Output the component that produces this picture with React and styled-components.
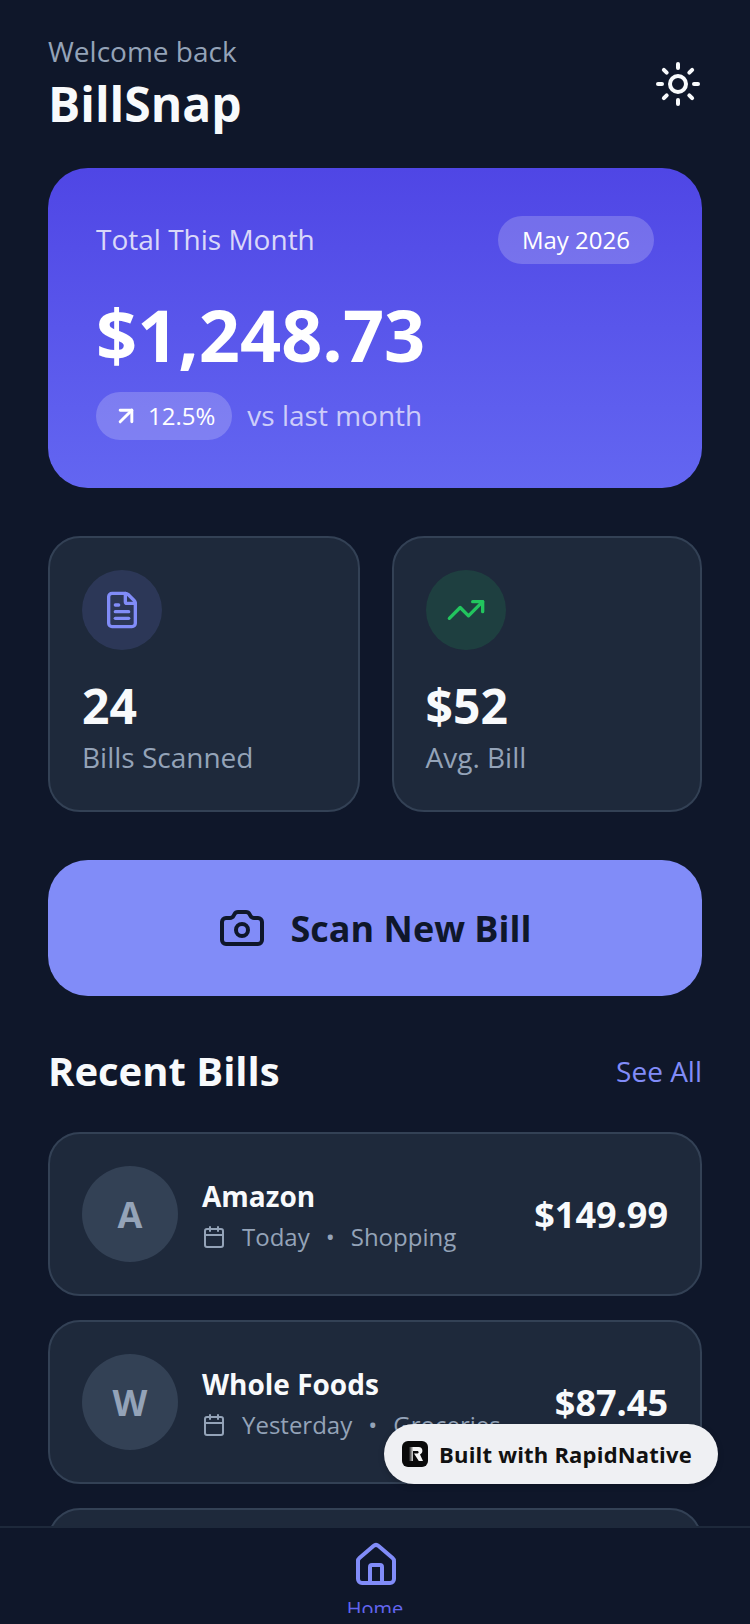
import React from "react";
import styled, { createGlobalStyle } from "styled-components";
import { Sun, FileText, TrendingUp, Camera, Calendar, ArrowUpRight, House } from "lucide-react";

const Global = createGlobalStyle`
  html, body { margin: 0; padding: 0; background: #0f172a; }
  * { box-sizing: border-box; }
`;
const Screen = styled.div`
  position: relative; width: 750px; height: 1624px; overflow: hidden; background: #0f172a;
  display: flex; flex-direction: column; font-family: "Open Sans", sans-serif; color: #f8fafc;
`;
const Scroll = styled.div`flex: 1; min-height: 0; overflow: hidden; padding: 32px 48px 0; display: flex; flex-direction: column;`;
const Header = styled.div`display: flex; justify-content: space-between; align-items: center; height: 104px; margin-bottom: 32px; flex: none;`;
const Welcome = styled.div`font-size: 28px; line-height: 38px; color: #94a3b8;`;
const Brand = styled.div`font-size: 48px; line-height: 64px; margin-top: 2px; font-weight: 700; color: #f8fafc;`;
const Hero = styled.div`
  height: 320px; flex: none; border-radius: 40px; padding: 48px; background: linear-gradient(180deg, #4f46e5, #6366f1);
  display: flex; flex-direction: column; margin-bottom: 48px;
`;
const HeroTop = styled.div`display: flex; justify-content: space-between; align-items: center; height: 48px;`;
const HeroLabel = styled.div`font-size: 28px; padding-bottom: 2px; color: rgba(255,255,255,.8);`;
const Pill = styled.div`
  height: 48px; border-radius: 24px; background: rgba(255,255,255,.2); color: #fff;
  display: flex; align-items: center; gap: 8px; padding: 0 ${p => p.$pad}px 2px ${p => p.$padLeft ?? p.$pad}px; font-size: 24px;
`;
const PillArrow = styled(ArrowUpRight)`margin-bottom: -2px;`;
const Amount = styled.div`font-size: 72px; line-height: 92px; font-weight: 700; color: #fff; margin-top: 24px;`;
const HeroFoot = styled.div`display: flex; align-items: center; gap: 15px; margin-top: 12px;`;
const Muted = styled.div`font-size: 28px; padding-bottom: 2px; color: rgba(255,255,255,.7);`;
const Stats = styled.div`display: grid; grid-template-columns: 311.5px 310.5px; gap: 32px; margin-bottom: 48px; flex: none;`;
const Stat = styled.div`
  height: 276px; border-radius: 32px; background: #1e293b; border: 2px solid #334155; padding: 32px;
  display: flex; flex-direction: column;
`;
const IconCircle = styled.div`
  width: 80px; height: 80px; border-radius: 50%; background: ${p => p.$bg};
  display: flex; align-items: center; justify-content: center; margin-bottom: 24px;
`;
const StatValue = styled.div`font-size: 48px; line-height: 64px; font-weight: 700;`;
const StatLabel = styled.div`font-size: 28px; line-height: 38px; color: #94a3b8;`;
const ScanButton = styled.div`
  height: 136px; border-radius: 40px; background: #818cf8; color: #0f172a; flex: none;
  display: flex; align-items: center; justify-content: center; gap: 24px;
  font-size: 36px; font-weight: 700; margin-bottom: 48px;
`;
const CameraIcon = styled(Camera)`margin-left: -1px; margin-right: 1px;`;
const SectionHead = styled.div`display: flex; justify-content: space-between; align-items: center; height: 56px; margin-bottom: 32px; flex: none;`;
const SectionTitle = styled.div`font-size: 40px; font-weight: 700; padding-bottom: 4px;`;
const SeeAll = styled.div`font-size: 28px; padding-bottom: 2px; color: #818cf8;`;
const Bills = styled.div`display: flex; flex-direction: column; gap: 24px;`;
const Bill = styled.div`
  height: 164px; flex: none; border-radius: 32px; background: #1e293b; border: 2px solid #334155; padding: 0 32px;
  display: flex; align-items: center;
`;
const Avatar = styled.div`
  width: 96px; height: 96px; border-radius: 50%; background: #334155; color: #94a3b8; flex: none;
  display: flex; align-items: center; justify-content: center; font-size: 36px; font-weight: 700; margin-right: 24px;
`;
const BillInfo = styled.div`flex: 1; min-width: 0; padding-top: 3px;`;
const BillName = styled.div`font-size: 28px; line-height: 38px; font-weight: 700;`;
const BillMeta = styled.div`display: flex; align-items: center; font-size: 24px; line-height: 36px; color: #94a3b8; margin-top: 4px; gap: 16px; white-space: nowrap;`;
const Price = styled.div`font-size: 36px; font-weight: 700; flex: none;`;
const TabBar = styled.div`
  height: 87px; flex: none; margin-bottom: 11px; background: #0f172a; border-top: 2px solid #1e293b;
  display: flex; flex-direction: column; align-items: center; padding-top: 13px; overflow: hidden;
`;
const TabLabel = styled.div`font-size: 20px; line-height: 28px; color: #6366f1; margin-top: 6px; flex: none;`;
const TabIcon = styled(House)`flex: none; margin-left: 2px;`;
const Badge = styled.div`
  position: absolute; left: 384px; top: 1424px; width: 334px; height: 60px; border-radius: 30px;
  background: #eff0f3; color: #111; display: flex; align-items: center; gap: 11px; padding-left: 18px;
  font-size: 22px; font-weight: 700; letter-spacing: .2px; white-space: nowrap;
  box-shadow: 0 2px 6px rgba(0,0,0,.2);
`;
const Logo = styled.div`width: 26px; height: 26px; border-radius: 6px; background: #0a0a0a; flex: none; display: flex;`;

const bills = [
  { l: "A", n: "Amazon", d: "Today", c: "Shopping", p: "$149.99" },
  { l: "W", n: "Whole Foods", d: "Yesterday", c: "Groceries", p: "$87.45" },
  { l: "N", n: "Netflix", d: "May 3", c: "Entertainment", p: "$15.99" },
];

export default function App() {
  return (
    <Screen>
      <Global />
      <Scroll>
        <Header>
          <div>
            <Welcome>Welcome back</Welcome>
            <Brand>BillSnap</Brand>
          </div>
          <Sun size={48} color="#f8fafc" strokeWidth={2} />
        </Header>
        <Hero>
          <HeroTop>
            <HeroLabel>Total This Month</HeroLabel>
            <Pill $pad={24}>May 2026</Pill>
          </HeroTop>
          <Amount>$1,248.73</Amount>
          <HeroFoot>
            <Pill $pad={17} $padLeft={16}><PillArrow size={28} color="#fff" strokeWidth={2.5} />12.5%</Pill>
            <Muted>vs last month</Muted>
          </HeroFoot>
        </Hero>
        <Stats>
          <Stat>
            <IconCircle $bg="rgba(129,140,248,.15)"><FileText size={40} color="#818cf8" /></IconCircle>
            <StatValue>24</StatValue>
            <StatLabel>Bills Scanned</StatLabel>
          </Stat>
          <Stat>
            <IconCircle $bg="rgba(34,197,94,.15)"><TrendingUp size={40} color="#22c55e" /></IconCircle>
            <StatValue>$52</StatValue>
            <StatLabel>Avg. Bill</StatLabel>
          </Stat>
        </Stats>
        <ScanButton><CameraIcon size={48} color="#0f172a" />Scan New Bill</ScanButton>
        <SectionHead>
          <SectionTitle>Recent Bills</SectionTitle>
          <SeeAll>See All</SeeAll>
        </SectionHead>
        <Bills>
          {bills.map(b => (
            <Bill key={b.n}>
              <Avatar>{b.l}</Avatar>
              <BillInfo>
                <BillName>{b.n}</BillName>
                <BillMeta>
                  <Calendar size={24} />
                  <span>{b.d}</span>
                  <span>•</span>
                  <span>{b.c}</span>
                </BillMeta>
              </BillInfo>
              <Price>{b.p}</Price>
            </Bill>
          ))}
        </Bills>
      </Scroll>
      <TabBar>
        <TabIcon size={48} color="#818cf8" />
        <TabLabel>Home</TabLabel>
      </TabBar>
      <Badge>
        <Logo>
          <svg width="26" height="26" viewBox="0 0 26 26">
            <defs>
              <linearGradient id="rstem" x1="0" x2="1" y1="0" y2="0">
                <stop offset="0" stopColor="#111" />
                <stop offset="1" stopColor="#ddd" />
              </linearGradient>
            </defs>
            <path d="M7 6h4v14H7z" fill="url(#rstem)" />
            <path d="M11 6h5.5c2.6 0 3.9 1.7 3.9 3.8 0 1.7-.9 3-2.4 3.6l3 6.6h-4.2L12 12.5h3.6c.8 0 1-.5 1-1.2 0-.8-.4-1.4-1.2-1.4H11z" fill="#f5f5f5" />
          </svg>
        </Logo>
        Built with RapidNative
      </Badge>
    </Screen>
  );
}
